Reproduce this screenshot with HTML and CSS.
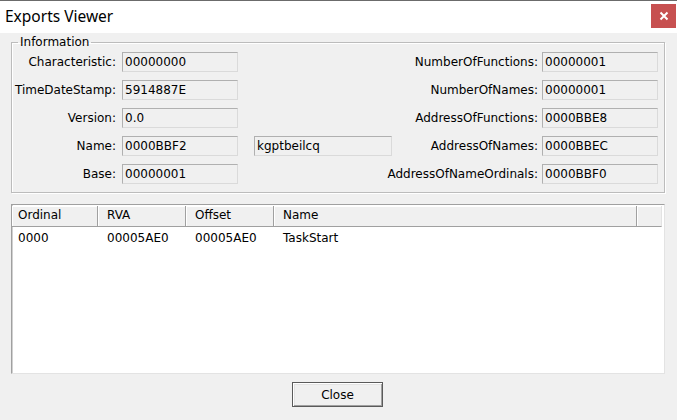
FILE: index.html
```html
<!DOCTYPE html>
<html>
<head>
<meta charset="utf-8">
<link rel="stylesheet" href="styles.css">
</head>
<body>
<div class="window">
  <div class="titlebar">
    <span class="title">Exports Viewer</span>
    <div class="close-x">
      <svg width="10" height="10" viewBox="0 0 10 10"><path d="M1.5 1.5 L8.5 8.5 M8.5 1.5 L1.5 8.5" stroke="#fff" stroke-width="2"/></svg>
    </div>
  </div>
  <div class="content">
    <fieldset class="group">
      <legend class="legend">Information</legend>
      <div class="grid">
        <label class="lbl">Characteristic:</label><div class="box">00000000</div><div class="empty"></div><label class="lbl r">NumberOfFunctions:</label><div class="box">00000001</div>
        <label class="lbl">TimeDateStamp:</label><div class="box">5914887E</div><div class="empty"></div><label class="lbl r">NumberOfNames:</label><div class="box">00000001</div>
        <label class="lbl">Version:</label><div class="box">0.0</div><div class="empty"></div><label class="lbl r">AddressOfFunctions:</label><div class="box">0000BBE8</div>
        <label class="lbl">Name:</label><div class="box">0000BBF2</div><div class="box wide">kgptbeilcq</div><label class="lbl r">AddressOfNames:</label><div class="box">0000BBEC</div>
        <label class="lbl">Base:</label><div class="box">00000001</div><div class="empty"></div><label class="lbl r">AddressOfNameOrdinals:</label><div class="box">0000BBF0</div>
      </div>
    </fieldset>
    <div class="list">
      <div class="header">
        <div class="hc c1">Ordinal</div>
        <div class="hc c2">RVA</div>
        <div class="hc c3">Offset</div>
        <div class="hc c4">Name</div>
        <div class="hc c5"></div>
      </div>
      <div class="row">
        <div class="cell c1">0000</div>
        <div class="cell c2">00005AE0</div>
        <div class="cell c3">00005AE0</div>
        <div class="cell c4">TaskStart</div>
      </div>
    </div>
    <div class="buttons">
      <button class="btn">Close</button>
    </div>
  </div>
</div>
</body>
</html>
```

FILE: styles.css
```css
* { box-sizing: border-box; }
html, body { margin: 0; padding: 0; }
body {
  width: 677px;
  height: 420px;
  background: #f0f0f0;
  font-family: "DejaVu Sans", sans-serif;
  font-size: 12px;
  color: #000;
  overflow: hidden;
}
.window { width: 677px; height: 420px; }
.titlebar {
  height: 33px;
  background: #fff;
  border-top: 1px solid #6b6b6b;
  display: flex;
  justify-content: space-between;
  align-items: flex-start;
  padding-left: 5px;
}
.title {
  font-family: "Noto Sans", sans-serif;
  font-size: 15.5px;
  line-height: 30px;
  color: #000;
}
.close-x {
  width: 25px;
  height: 24px;
  margin-top: 3px;
  margin-right: 1px;
  background: #c75050;
  display: flex;
  align-items: center;
  justify-content: center;
}
.content { padding: 0 12px 0 11px; }
.group {
  margin: 2px 0 0 0;
  padding: 3px 6px 8px 0;
  border: 1px solid #bcbcbc;
  box-shadow: inset 1px 1px 0 #fff, 1px 1px 0 #fff;
  min-width: 0;
}
.legend {
  margin-left: 6px;
  padding: 0 2px;
  line-height: 14px;
  font-size: 12px;
}
.grid {
  display: grid;
  grid-template-columns: 110px 116px 154px minmax(0, 1fr) 116px;
  grid-template-rows: 20px 20px 20px 20px 20px;
  row-gap: 8px;
}
.lbl {
  justify-self: end;
  margin-right: 6px;
  line-height: 20px;
  white-space: nowrap;
}
.lbl.r { margin-right: 4px; }
.box {
  border: 1px solid;
  border-color: #b0b0b0 #dadada #dadada #b0b0b0;
  background: #f0f0f0;
  line-height: 18px;
  padding-left: 2px;
  white-space: nowrap;
}
.box.wide { margin-left: 16px; }
.list {
  margin-top: 11px;
  height: 170px;
  background: #fff;
  border: 1px solid;
  border-color: #a0a0a0 #e3e3e3 #e3e3e3 #a0a0a0;
  box-shadow: inset 1px 0 0 #d0d0d0;
}
.header {
  display: flex;
  height: 21px;
  margin-top: 1px;
}
.hc {
  background: #f0f0f0;
  line-height: 19px;
  border-right: 1px solid #a0a0a0;
  border-bottom: 1px solid #a0a0a0;
  box-shadow: inset 1px 1px 0 #fff;
  white-space: nowrap;
}
.c1 { width: 86px; padding-left: 6px; }
.c2 { width: 88px; padding-left: 9px; }
.c3 { width: 88px; padding-left: 9px; }
.c4 { width: 363px; padding-left: 9px; }
.hc.c5 { width: 25px; border-right: 1px solid #e3e3e3; }
.row {
  display: flex;
  margin-top: 3px;
  height: 17px;
  line-height: 17px;
}
.cell { white-space: nowrap; }
.buttons {
  display: flex;
  justify-content: center;
  padding-top: 8px;
  padding-right: 1px;
}
.btn {
  width: 91px;
  height: 25px;
  font-family: "DejaVu Sans", sans-serif;
  font-size: 12px;
  color: #000;
  background: #f0f0f0;
  border: 1px solid #5a5a5a;
  box-shadow: inset 1px 1px 0 #fff, inset -1px -1px 0 #a0a0a0, inset 2px 2px 0 #e3e3e3;
  padding: 0;
}
```
